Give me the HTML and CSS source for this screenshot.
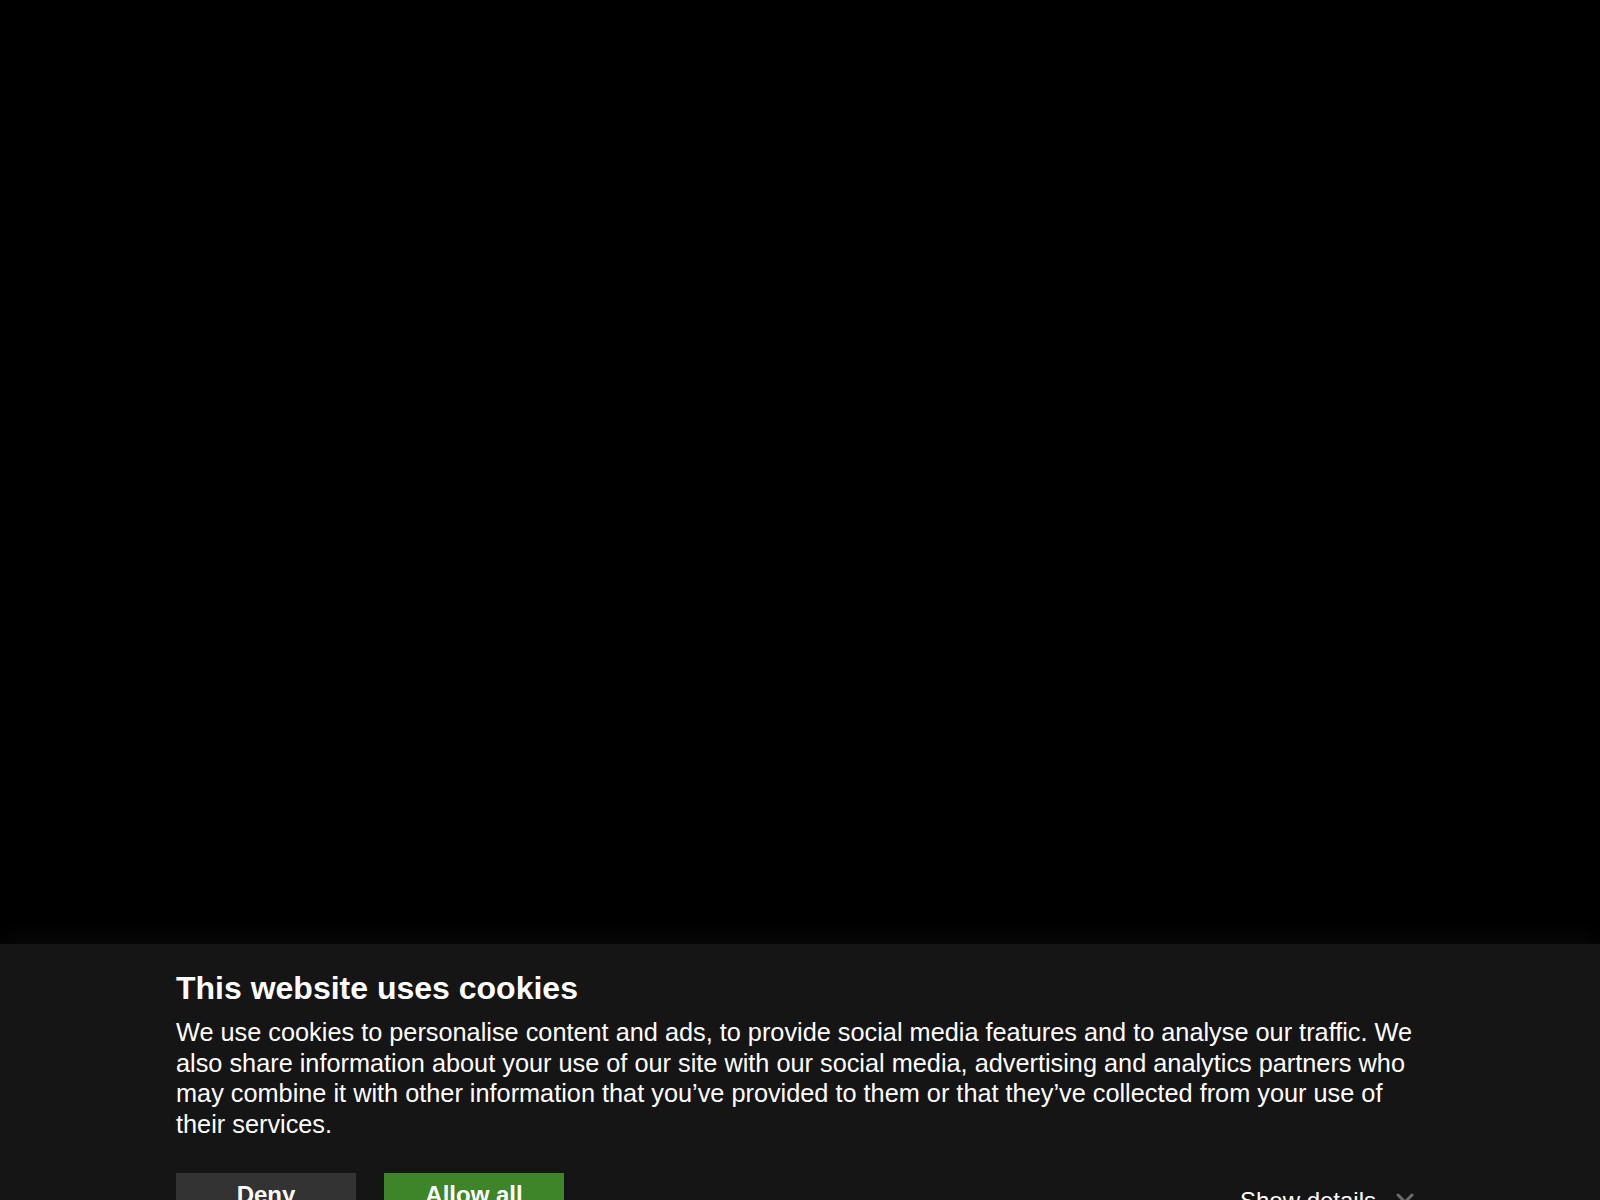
FILE: index.html
```html
<!DOCTYPE html>
<html lang="en">
<head>
<meta charset="utf-8">
<title>Cookies</title>
<link rel="stylesheet" href="styles.css">
</head>
<body>
<main class="stage"></main>
<section class="banner">
  <div class="banner-inner">
    <h2 class="banner-title">This website uses cookies</h2>
    <p class="banner-text">We use cookies to personalise content and ads, to provide social media features and to analyse our traffic. We also share information about your use of our site with our social media, advertising and analytics partners who may combine it with other information that you’ve provided to them or that they’ve collected from your use of their services.</p>
    <div class="banner-actions">
      <button class="btn btn-deny">Deny</button>
      <button class="btn btn-allow">Allow all</button>
      <a class="details" href="#">Show details
        <svg class="chev" width="18" height="11" viewBox="0 0 18 11"><path d="M2 2 L9 9 L16 2" fill="none" stroke="#6b6b6b" stroke-width="3" stroke-linecap="round" stroke-linejoin="round"/></svg>
      </a>
    </div>
  </div>
</section>
</body>
</html>
```

FILE: styles.css
```css
html, body {
  margin: 0;
  padding: 0;
  background: #000;
  font-family: "Liberation Sans", Arial, sans-serif;
  color: #fff;
}
.stage {
  display: block;
  height: 944px;
  background: #000;
}
.banner {
  background: #151515;
  box-shadow: 0 -6px 24px rgba(255, 255, 255, 0.035);
  padding: 26px 0 40px;
}
.banner-inner {
  width: 1248px;
  margin: 0 auto;
}
.banner-title {
  margin: 0;
  font-size: 32px;
  font-weight: 700;
  line-height: normal;
}
.banner-text {
  margin: 10px 0 0;
  font-size: 25.3px;
  line-height: 30.6px;
}
.banner-actions {
  display: flex;
  align-items: flex-start;
  gap: 28px;
  margin-top: 34px;
}
.btn {
  width: 180px;
  border: 0;
  padding: 8px 0;
  font-family: "Liberation Sans", Arial, sans-serif;
  font-size: 24px;
  font-weight: 700;
  color: #fff;
  line-height: normal;
  cursor: pointer;
}
.btn-deny {
  background: #333333;
}
.btn-allow {
  background: #3e8428;
}
.details {
  margin-left: auto;
  margin-top: 14px;
  display: flex;
  align-items: flex-start;
  gap: 20px;
  font-size: 24px;
  color: #fff;
  text-decoration: none;
  padding-right: 10px;
}
.chev {
  margin-top: 6px;
}
```
